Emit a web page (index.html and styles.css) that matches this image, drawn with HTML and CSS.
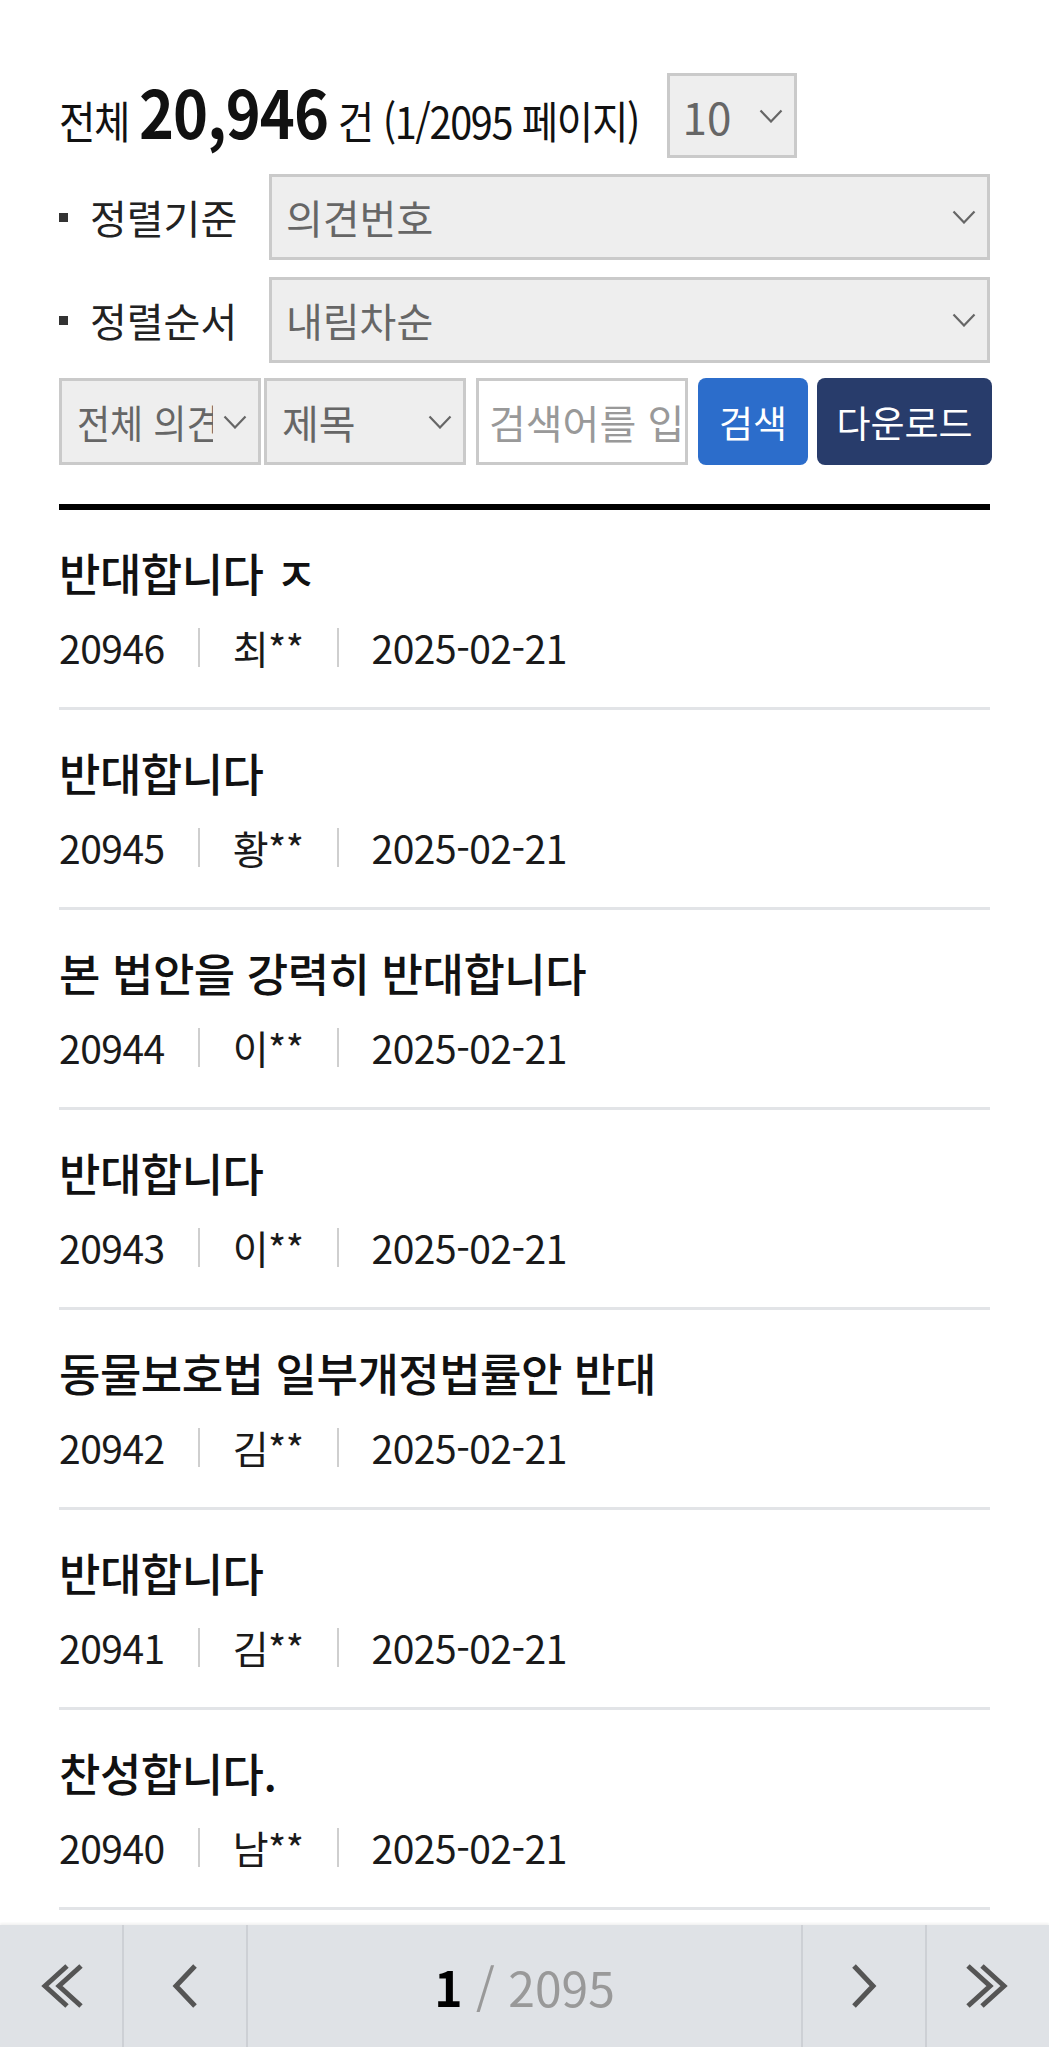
FILE: index.html
```html
<!DOCTYPE html>
<html lang="ko">
<head>
<meta charset="utf-8">
<title>의견 목록</title>
<link rel="stylesheet" href="styles.css">
</head>
<body>
<div class="page">
  <div class="summary">
    <p class="summary-text">전체 <strong class="summary-count">20,946</strong> 건 (1/2095 페이지)</p>
    <div class="select per-page">
      <span class="select-value">10</span>
      <svg class="chev" viewBox="0 0 24 14"><path d="M1.5 1.5 L12 12.5 L22.5 1.5"/></svg>
    </div>
  </div>

  <div class="sort-row">
    <div class="sort-label"><span class="bullet"></span>정렬기준</div>
    <div class="select sort-select">
      <span class="select-value">의견번호</span>
      <svg class="chev" viewBox="0 0 24 14"><path d="M1.5 1.5 L12 12.5 L22.5 1.5"/></svg>
    </div>
  </div>
  <div class="sort-row">
    <div class="sort-label"><span class="bullet"></span>정렬순서</div>
    <div class="select sort-select">
      <span class="select-value">내림차순</span>
      <svg class="chev" viewBox="0 0 24 14"><path d="M1.5 1.5 L12 12.5 L22.5 1.5"/></svg>
    </div>
  </div>

  <div class="search-row">
    <div class="select search-select">
      <span class="select-value clip"><span class="narrow">전체 의견</span></span>
      <svg class="chev" viewBox="0 0 24 14"><path d="M1.5 1.5 L12 12.5 L22.5 1.5"/></svg>
    </div>
    <div class="select search-select second">
      <span class="select-value">제목</span>
      <svg class="chev" viewBox="0 0 24 14"><path d="M1.5 1.5 L12 12.5 L22.5 1.5"/></svg>
    </div>
    <div class="search-input"><span class="placeholder">검색어를 입력하세요</span></div>
    <button class="btn btn-search" type="button">검색</button>
    <button class="btn btn-download" type="button">다운로드</button>
  </div>

  <ul class="list">
    <li class="item">
      <p class="item-title">반대합니다 ㅈ</p>
      <p class="item-meta"><span>20946</span><i class="sep"></i><span>최**</span><i class="sep"></i><span>2025-02-21</span></p>
    </li>
    <li class="item">
      <p class="item-title">반대합니다</p>
      <p class="item-meta"><span>20945</span><i class="sep"></i><span>황**</span><i class="sep"></i><span>2025-02-21</span></p>
    </li>
    <li class="item">
      <p class="item-title">본 법안을 강력히 반대합니다</p>
      <p class="item-meta"><span>20944</span><i class="sep"></i><span>이**</span><i class="sep"></i><span>2025-02-21</span></p>
    </li>
    <li class="item">
      <p class="item-title">반대합니다</p>
      <p class="item-meta"><span>20943</span><i class="sep"></i><span>이**</span><i class="sep"></i><span>2025-02-21</span></p>
    </li>
    <li class="item">
      <p class="item-title">동물보호법 일부개정법률안 반대</p>
      <p class="item-meta"><span>20942</span><i class="sep"></i><span>김**</span><i class="sep"></i><span>2025-02-21</span></p>
    </li>
    <li class="item">
      <p class="item-title">반대합니다</p>
      <p class="item-meta"><span>20941</span><i class="sep"></i><span>김**</span><i class="sep"></i><span>2025-02-21</span></p>
    </li>
    <li class="item">
      <p class="item-title">찬성합니다.</p>
      <p class="item-meta"><span>20940</span><i class="sep"></i><span>남**</span><i class="sep"></i><span>2025-02-21</span></p>
    </li>
    <li class="item">
      <p class="item-title">반대합니다</p>
      <p class="item-meta"><span>20939</span><i class="sep"></i><span>박**</span><i class="sep"></i><span>2025-02-21</span></p>
    </li>
  </ul>
</div>

<nav class="pager">
  <a class="pager-btn" href="#" aria-label="처음">
    <svg class="pg-icon dbl" viewBox="0 0 44 44"><path d="M28 2 L6 22 L28 42"/><path d="M42 2 L20 22 L42 42"/></svg>
  </a>
  <a class="pager-btn" href="#" aria-label="이전">
    <svg class="pg-icon" viewBox="0 0 26 44"><path d="M23 2 L4 22 L23 42"/></svg>
  </a>
  <div class="pager-info"><b>1</b><span> / 2095</span></div>
  <a class="pager-btn" href="#" aria-label="다음">
    <svg class="pg-icon" viewBox="0 0 26 44"><path d="M3 2 L22 22 L3 42"/></svg>
  </a>
  <a class="pager-btn" href="#" aria-label="마지막">
    <svg class="pg-icon dbl" viewBox="0 0 44 44"><path d="M2 2 L24 22 L2 42"/><path d="M16 2 L38 22 L16 42"/></svg>
  </a>
</nav>
</body>
</html>
```

FILE: styles.css
```css
* { box-sizing: border-box; }

html, body {
  margin: 0;
  padding: 0;
  background: #fff;
}

body {
  font-family: "Noto Sans CJK KR", "Noto Sans", sans-serif;
  color: #111;
}

p { margin: 0; }

.page {
  padding: 73px 59px 140px;
}

/* summary */
.summary {
  display: flex;
  align-items: center;
  height: 85px;
}

.summary-text {
  font-size: 44px;
  line-height: 85px;
  color: #111;
  letter-spacing: -1.5px;
  white-space: nowrap;
  transform: scaleX(0.9);
  transform-origin: 0 50%;
}

.summary-count {
  font-size: 66px;
  font-weight: 700;
  letter-spacing: -1px;
}

/* selects */
.select {
  display: flex;
  align-items: center;
  justify-content: space-between;
  height: 86px;
  background: #eeeeee;
  border: 3px solid #cacaca;
  color: #666;
  font-size: 40px;
  padding: 0 11px 0 14px;
  overflow: hidden;
}

.select-value {
  white-space: nowrap;
  line-height: 1;
}

.chev {
  width: 24px;
  height: 14px;
  flex: none;
  fill: none;
  stroke: #666;
  stroke-width: 2.2;
}

.per-page {
  width: 130px;
  height: 85px;
  margin-left: -37px;
  font-size: 44px;
  padding: 0 11px 0 13px;
}

.sort-row {
  display: flex;
  align-items: center;
  margin-top: 16px;
}

.sort-row + .sort-row {
  margin-top: 17px;
}

.sort-label {
  width: 210px;
  flex: none;
  display: flex;
  align-items: center;
  font-size: 40px;
  color: #222;
}

.bullet {
  width: 9px;
  height: 9px;
  background: #333;
  margin-right: 22px;
}

.sort-select {
  flex: 1;
}

/* search row */
.search-row {
  display: flex;
  align-items: stretch;
  height: 87px;
  margin-top: 15px;
}

.search-select {
  width: 202px;
  height: 87px;
  flex: none;
  padding: 0 11px 0 15px;
}

.search-select.second {
  margin-left: 3px;
}

.clip {
  width: 136px;
  overflow: hidden;
  font-size: 40px;
  margin-right: 8px;
}

.narrow {
  display: inline-block;
  transform: scaleX(0.9);
  transform-origin: 0 50%;
}

.search-input {
  width: 212px;
  flex: none;
  margin-left: 10px;
  border: 3px solid #cacaca;
  background: #fff;
  display: flex;
  align-items: center;
  padding: 0 0 0 10px;
  overflow: hidden;
  font-size: 40px;
}

.placeholder {
  color: #999;
  white-space: nowrap;
}

.btn {
  border: 0;
  border-radius: 8px;
  color: #fff;
  font-family: inherit;
  font-size: 37px;
  padding: 0;
  margin: 0;
  flex: none;
  cursor: pointer;
}

.btn-search {
  width: 110px;
  margin-left: 10px;
  background: #2c6dcb;
}

.btn-download {
  width: 175px;
  margin-left: 9px;
  background: #283c6b;
}

/* list */
.list {
  list-style: none;
  margin: 39px 0 0;
  padding: 0;
  border-top: 6px solid #000;
}

.item {
  padding: 33px 0 32px;
  border-bottom: 3px solid #e2e4e7;
}

.item-title {
  font-size: 45px;
  line-height: 60px;
  font-weight: 500;
  color: #111;
  letter-spacing: -0.5px;
}

.item-meta {
  margin-top: 16px;
  display: flex;
  align-items: center;
  font-size: 39px;
  line-height: 56px;
  color: #1a1a1a;
  letter-spacing: -0.5px;
}

.sep {
  display: block;
  width: 2px;
  height: 39px;
  background: #cfcfcf;
  margin: 0 33px;
}

/* pager */
.pager {
  position: fixed;
  left: 0;
  right: 0;
  bottom: 0;
  height: 122px;
  display: flex;
  background: #dfe2e6;
  box-shadow: 0 -2px 2px rgba(0, 0, 0, 0.05);
}

.pager-btn {
  width: 124px;
  flex: none;
  display: flex;
  align-items: center;
  justify-content: center;
  border-right: 2px solid #cdd0d5;
}

.pager-btn:nth-last-child(-n+2) {
  border-right: 0;
  border-left: 2px solid #cdd0d5;
}

.pg-icon {
  width: 26px;
  height: 44px;
  fill: none;
  stroke: #555;
  stroke-width: 5;
}

.pg-icon.dbl {
  width: 44px;
}

.pager-info {
  flex: 1;
  display: flex;
  align-items: center;
  justify-content: center;
  font-size: 48px;
  white-space: pre;
}

.pager-info b {
  color: #000;
  font-weight: 700;
}

.pager-info span {
  color: #999;
}
```
